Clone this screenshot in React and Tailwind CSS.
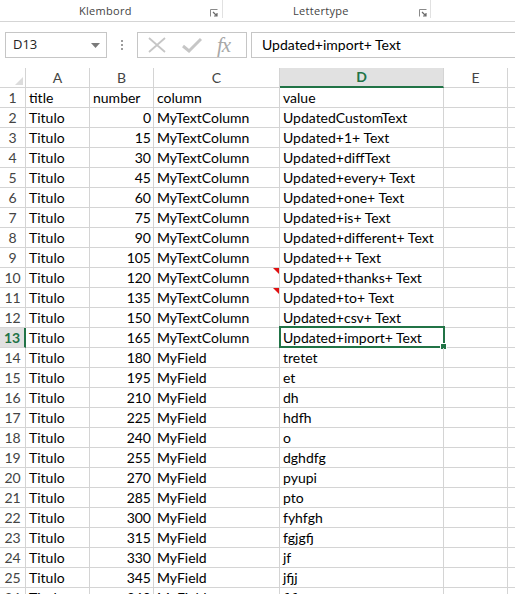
import React from "react";

const rows = [
  ["title", "number", "column", "value", true],
  ["Titulo", "0", "MyTextColumn", "UpdatedCustomText"],
  ["Titulo", "15", "MyTextColumn", "Updated+1+ Text"],
  ["Titulo", "30", "MyTextColumn", "Updated+diffText"],
  ["Titulo", "45", "MyTextColumn", "Updated+every+ Text"],
  ["Titulo", "60", "MyTextColumn", "Updated+one+ Text"],
  ["Titulo", "75", "MyTextColumn", "Updated+is+ Text"],
  ["Titulo", "90", "MyTextColumn", "Updated+different+ Text"],
  ["Titulo", "105", "MyTextColumn", "Updated++ Text"],
  ["Titulo", "120", "MyTextColumn", "Updated+thanks+ Text"],
  ["Titulo", "135", "MyTextColumn", "Updated+to+ Text"],
  ["Titulo", "150", "MyTextColumn", "Updated+csv+ Text"],
  ["Titulo", "165", "MyTextColumn", "Updated+import+ Text"],
  ["Titulo", "180", "MyField", "tretet"],
  ["Titulo", "195", "MyField", "et"],
  ["Titulo", "210", "MyField", "dh"],
  ["Titulo", "225", "MyField", "hdfh"],
  ["Titulo", "240", "MyField", "o"],
  ["Titulo", "255", "MyField", "dghdfg"],
  ["Titulo", "270", "MyField", "pyupi"],
  ["Titulo", "285", "MyField", "pto"],
  ["Titulo", "300", "MyField", "fyhfgh"],
  ["Titulo", "315", "MyField", "fgjgfj"],
  ["Titulo", "330", "MyField", "jf"],
  ["Titulo", "345", "MyField", "jfjj"],
  ["Titulo", "360", "MyField", "fjfj"],
];

function Launcher() {
  return (
    <svg width="8" height="8" viewBox="0 0 8 8" className="block">
      <path d="M0.5 7.5 V0.5 H7.5" fill="none" stroke="#8a8a8a" strokeWidth="1" />
      <path d="M3 3 L7 7 M7 4 V7 H4" fill="none" stroke="#6a6a6a" strokeWidth="1.2" />
    </svg>
  );
}

export default function App() {
  const cell = "font-['Lato',sans-serif] text-[14px] text-black leading-none";
  return (
    <div className="w-[515px] h-[594px] overflow-hidden bg-white">
      {/* ribbon bottom strip */}
      <div className="h-[22px] border-b border-[#d5d5d5] flex font-['Open_Sans',sans-serif] text-[11px] text-[#444] tracking-[0.3px]">
        <div className="w-[223px] h-[18px] border-r border-[#e1e1e1] flex items-center relative">
          <span className="absolute left-[79px] top-[5px] leading-none">Klembord</span>
          <span className="absolute left-[210px] top-[9px]"><Launcher /></span>
        </div>
        <div className="w-[208px] h-[18px] border-r border-[#e1e1e1] relative">
          <span className="absolute left-[70px] top-[5px] leading-none">Lettertype</span>
          <span className="absolute left-[196px] top-[9px]"><Launcher /></span>
        </div>
      </div>

      {/* formula bar */}
      <div className="h-[46px] pt-[10px] flex items-start">
        <div className="ml-[5px] w-[102px] h-[26px] border border-[#c6c6c6] flex items-center justify-between pl-[7px] pr-[6px]">
          <span className="font-['Open_Sans',sans-serif] text-[13px] text-[#222]">D13</span>
          <svg width="9" height="5" viewBox="0 0 9 5"><path d="M0 0 H9 L4.5 5 Z" fill="#7a7a7a" /></svg>
        </div>
        <div className="w-[30px] h-[26px] flex flex-col items-center justify-center gap-[2px]">
          <span className="w-[2px] h-[2px] bg-[#9c9c9c]" />
          <span className="w-[2px] h-[2px] bg-[#9c9c9c]" />
          <span className="w-[2px] h-[2px] bg-[#9c9c9c]" />
        </div>
        <div className="w-[110px] h-[26px] border border-[#c6c6c6] flex items-center">
          <svg width="20" height="16" viewBox="0 0 20 16" className="ml-[9px]">
            <path d="M2 1 L18 15 M18 1 L2 15" stroke="#c6c6c6" strokeWidth="1.8" fill="none" />
          </svg>
          <svg width="20" height="16" viewBox="0 0 20 16" className="ml-[15px]">
            <path d="M1 9 L7 14 L19 2" stroke="#c6c6c6" strokeWidth="3" fill="none" />
          </svg>
          <span className="ml-[15px] font-['Liberation_Serif',serif] italic text-[21px] text-[#a8a8a8] leading-none tracking-[-1px]">fx</span>
        </div>
        <div className="ml-[4px] flex-1 h-[26px] border border-r-0 border-[#c6c6c6] flex items-center pl-[10px]">
          <span className={cell}>Updated+import+ Text</span>
        </div>
      </div>

      {/* column header */}
      <div className={"flex h-[20px] " + cell + " text-[#444]"}>
        <div className="w-[26px] border-r border-b border-[#d4d4d4] relative">
          <svg width="8" height="8" viewBox="0 0 8 8" className="absolute right-[2px] bottom-[2px]">
            <path d="M8 0 V8 H0 Z" fill="#dcdcdc" />
          </svg>
        </div>
        <div className="w-[64px] border-r border-b border-[#d4d4d4] flex items-center justify-center text-[#444]">A</div>
        <div className="w-[64px] border-r border-b border-[#d4d4d4] flex items-center justify-center text-[#444]">B</div>
        <div className="w-[126px] border-r border-b border-[#d4d4d4] flex items-center justify-center text-[#444]">C</div>
        <div className="w-[164px] border-r border-[#d4d4d4] border-b-2 border-b-[#217346] bg-[#e1e1e1] flex items-center justify-center text-[#217346] font-bold">D</div>
        <div className="w-[64px] border-r border-b border-[#d4d4d4] flex items-center justify-center text-[#444]">E</div>
        <div className="flex-1 border-b border-[#d4d4d4]" />
      </div>

      {rows.map((r, i) => {
        const n = i + 1;
        const sel = n === 13;
        const comment = n === 10 || n === 11;
        const isText = n === 1;
        return (
          <div key={n} className={"flex h-[20px] " + cell}>
            <div
              className={
                "w-[26px] border-b border-[#d4d4d4] flex items-center justify-center " +
                (sel
                  ? "bg-[#e1e1e1] text-[#217346] font-bold border-r-2 border-r-[#217346]"
                  : "border-r text-[#444]")
              }
            >
              {n}
            </div>
            <div className="w-[64px] border-r border-b border-[#d4d4d4] flex items-center pl-[3px]">{r[0]}</div>
            <div
              className={
                "w-[64px] border-r border-b border-[#d4d4d4] flex items-center " +
                (isText ? "pl-[3px]" : "justify-end pr-[2px]")
              }
            >
              {r[1]}
            </div>
            <div className="w-[126px] border-r border-b border-[#d4d4d4] flex items-center pl-[3px] relative">
              {r[2]}
              {comment && (
                <svg width="6" height="6" viewBox="0 0 6 6" className="absolute right-0 top-0">
                  <path d="M0 0 H6 V6 Z" fill="#e01010" />
                </svg>
              )}
            </div>
            <div className="w-[164px] border-r border-b border-[#d4d4d4] flex items-center pl-[3px] relative">
              {r[3]}
              {sel && (
                <>
                  <div className="absolute left-[-1px] top-[-2px] w-[166px] h-[22px] border-2 border-[#217346]" />
                  <div className="absolute left-[160px] top-[15px] w-[7px] h-[7px] bg-[#217346] border border-white" />
                </>
              )}
            </div>
            <div className="w-[64px] border-r border-b border-[#d4d4d4]" />
            <div className="flex-1 border-b border-[#d4d4d4]" />
          </div>
        );
      })}
    </div>
  );
}
